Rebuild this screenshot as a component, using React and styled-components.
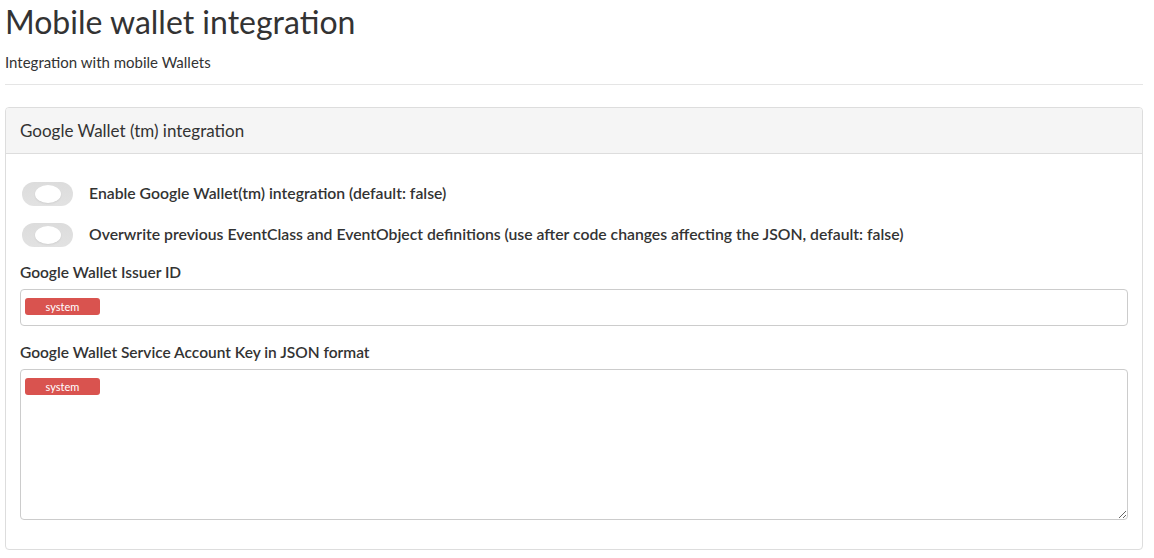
import React from 'react';
import styled, { createGlobalStyle } from 'styled-components';

const GlobalStyle = createGlobalStyle`
    body {
        margin: 0;
        background: #fff;
        font-family: "Source Sans Pro", Lato, "Liberation Sans", sans-serif;
        color: #333;
    }
`

const Page = styled.div`
    padding: 2px 11px 8px 5px;
`

const Title = styled.h1`
    margin: 0;
    font-size: 32px;
    line-height: 40px;
    font-weight: 400;
    color: #333;
`

const Subtitle = styled.p`
    margin: 10px 0 0 0;
    font-size: 15px;
    line-height: 20px;
`

const Rule = styled.hr`
    margin: 12px 0 0 0;
    border: 0;
    border-top: 1px solid #e5e5e5;
`

const Panel = styled.div`
    margin-top: 22px;
    border: 1px solid #ddd;
    border-radius: 4px;
`

const PanelHeader = styled.div`
    height: 45px;
    display: flex;
    align-items: center;
    padding: 0 14px;
    background-color: #f5f5f5;
    border-bottom: 1px solid #ddd;
    border-top-left-radius: 3px;
    border-top-right-radius: 3px;
    font-size: 17px;
    color: #333;
`

const PanelBody = styled.div`
    padding: 25px 14px 29px 14px;
    display: flex;
    flex-direction: column;
`

const ToggleRow = styled.div`
    display: flex;
    align-items: center;
    height: 30px;
    margin-bottom: ${props => props.last ? '12px' : '11px'};
`

const Switch = styled.div`
    position: relative;
    width: 51px;
    height: 24px;
    margin-left: 2px;
    margin-right: 16px;
    border-radius: 12px;
    background: linear-gradient(#dcdcdc, #e2e2e2);
    flex-shrink: 0;
`

const Knob = styled.span`
    position: absolute;
    left: 13px;
    top: 3px;
    width: 26px;
    height: 18px;
    border-radius: 50%;
    background: #fff;
    box-shadow: 0 1px 2px rgba(0, 0, 0, 0.08);
`

const ToggleLabel = styled.span`
    font-size: 15.75px;
    line-height: 20px;
    margin-top: -3px;
    font-weight: 600;
    color: #333;
`

const FieldLabel = styled.label`
    font-size: 15.5px;
    line-height: 20px;
    font-weight: 600;
    margin-bottom: 7px;
`

const Field = styled.div`
    position: relative;
    margin-bottom: ${props => props.gap || '0'};
`

const TextInput = styled.input`
    display: block;
    box-sizing: border-box;
    width: 100%;
    height: 37px;
    border: 1px solid #ccc;
    border-radius: 4px;
    background: #fff;
    font-family: inherit;
`

const TextArea = styled.textarea`
    display: block;
    box-sizing: border-box;
    width: 100%;
    height: 151px;
    border: 1px solid #ccc;
    border-radius: 4px;
    resize: vertical;
    background: #fff;
    font-family: inherit;
`

const Badge = styled.span`
    position: absolute;
    left: 5px;
    top: 9px;
    width: 75px;
    height: 17px;
    border-radius: 3px;
    background-color: #d9534f;
    color: #fff;
    font-size: 11px;
    line-height: 17px;
    text-align: center;
`

const Toggle = ({ children, last }) => (
    <ToggleRow last={last}>
        <Switch><Knob /></Switch>
        <ToggleLabel>{children}</ToggleLabel>
    </ToggleRow>
)

const App = () => {
    return (
        <Page>
            <GlobalStyle />
            <Title>Mobile wallet integration</Title>
            <Subtitle>Integration with mobile Wallets</Subtitle>
            <Rule />

            <Panel>
                <PanelHeader>Google Wallet (tm) integration</PanelHeader>
                <PanelBody>
                    <Toggle>Enable Google Wallet(tm) integration (default: false)</Toggle>
                    <Toggle last>Overwrite previous EventClass and EventObject definitions (use after code changes affecting the JSON, default: false)</Toggle>

                    <FieldLabel>Google Wallet Issuer ID</FieldLabel>
                    <Field gap="16px">
                        <TextInput type="text" />
                        <Badge>system</Badge>
                    </Field>

                    <FieldLabel>Google Wallet Service Account Key in JSON format</FieldLabel>
                    <Field>
                        <TextArea />
                        <Badge>system</Badge>
                    </Field>
                </PanelBody>
            </Panel>
        </Page>
    )
}

export default App;
